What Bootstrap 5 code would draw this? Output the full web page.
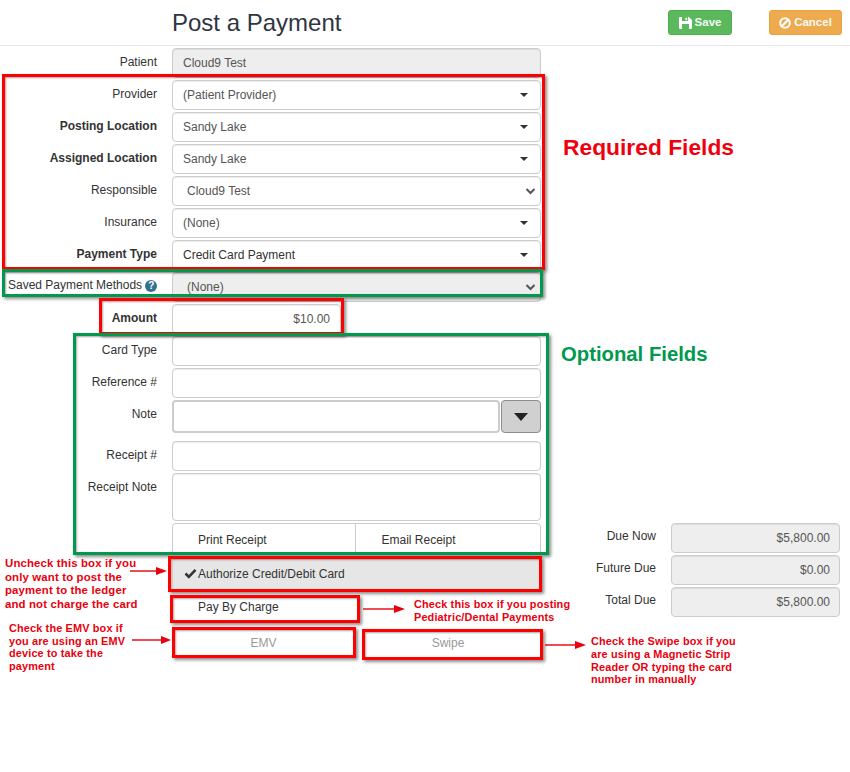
<!DOCTYPE html>
<html lang="en">
<head>
<meta charset="utf-8">
<title>Post a Payment</title>
<link href="https://cdn.jsdelivr.net/npm/bootstrap@5.3.0/dist/css/bootstrap.min.css" rel="stylesheet">
<style>
html,body{margin:0;background:#fff}
body{font-family:"Liberation Sans",Arial,sans-serif;font-size:12px;color:#333}
.pay-page{position:relative;width:850px;height:772px;overflow:hidden}
.pay-head{height:46px;border-bottom:1px solid #e7e7e7;padding-left:172px;padding-right:8px}
.pay-title{font-size:24px;font-weight:400;margin:0;color:#2f3542;line-height:42px;flex:1}
.pay-btn{font-size:11.5px;font-weight:700;color:#f4fbf4;height:25px;padding:0;border-radius:3px;display:flex;align-items:center;justify-content:center;gap:3px;border:1px solid transparent}
.pay-save{width:64px;background:#5cb85c;border-color:#4cae4c;margin-right:37px}
.pay-cancel{width:73px;background:#eeaa4f;border-color:#eea236}
.pay-save:hover{background:#5cb85c;color:#fff}.pay-cancel:hover{background:#eeaa4f;color:#fff}
.pay-left{width:541px;padding-top:2px}
.pay-right{margin-top:477px;width:284px;margin-left:15px}
.frow{display:flex;margin-bottom:2px}
.flabel{width:157px;margin:0 15px 0 0;text-align:right;padding-top:6px;line-height:16px;flex:none;white-space:nowrap;color:#333}
.flabel.strong{font-weight:700}
.flabel.due{width:100px;padding-top:5px}
.fbox.form-control,.fbox.form-select{height:30px;min-height:0;font-size:12px;color:#555;border:1px solid #ccc;border-radius:4px;padding:0 10px;box-shadow:inset 0 1px 1px rgba(0,0,0,.075);line-height:28px}
.fbox.form-select{background-position:right 10px center;background-size:12px 10px;padding-right:24px}
.fbox.caret{appearance:none;background-image:url("data:image/svg+xml,%3Csvg xmlns='http://www.w3.org/2000/svg' viewBox='0 0 12 10'%3E%3Cpath d='M2 3h8L6 7z' fill='%23333'/%3E%3C/svg%3E")}
.fbox.native{padding-left:14px;background-size:13px 10px;background-image:url("data:image/svg+xml,%3Csvg xmlns='http://www.w3.org/2000/svg' viewBox='0 0 13 10'%3E%3Cpath d='M2.5 3l4 4 4-4' fill='none' stroke='%23555' stroke-width='2'/%3E%3C/svg%3E");background-position:right 3px center}
.fbox.dark{color:#333}
.fbox.form-control:disabled,.fbox.form-select:disabled{background-color:#eee;opacity:1}
.fbox.num{text-align:right;padding-right:10px}
.pay-right .fbox.num{padding-right:9px}
.fnarrow{width:169px;flex:none}
.fbox.tall{height:48px;resize:none;line-height:1.4}
.fbox.noteinp{height:33px;border-radius:4px;border-width:2px;box-shadow:none;flex:1}
.notebtn{width:40px;height:33px;margin-left:1px;background:#d0d0d0;border:1px solid #8c8c8c;border-radius:4px;padding:0;display:flex;align-items:center;justify-content:center}
.notebtn:hover{background:#d0d0d0}
.togs{width:369px;margin-left:172px}
.tog{font-size:12px;color:#333;background:#fff;border:1px solid #ccc;height:31px;border-radius:0;padding:3px 0 0 25px;text-align:left;line-height:18px;flex:none}
.tog:hover{background:#fff;color:#333}
.tog-a{width:183px}.tog-b{width:186px}
.togs.btn-group>.tog:first-child{border-radius:4px 0 0 0}
.togs.btn-group>.tog:last-child{border-radius:0 4px 0 0;padding-left:26px}
.tog-wide{display:flex;align-items:center;width:369px;margin-left:172px;height:31px;font-size:12px;color:#333;background:#e6e6e6;border:0;padding:0 0 0 12px;gap:1px;margin-top:4px;border-radius:0}
.tog-wide:hover{background:#e6e6e6;color:#333}
.tog-pay{display:block;width:183px;margin-left:172px;height:26px;font-size:12px;color:#333;background:#fff;border:0;padding:0 0 0 26px;margin-top:5px;text-align:left;border-radius:0}
.tog-pay:hover{background:#fff;color:#333}
.tog-pair{margin-left:172px;margin-top:8px;gap:10px;width:369px}
.tog-off{height:26px;font-size:12px;color:#999;background:#fff;border:0;padding:3px 0 0;border-radius:0;flex:none}
.tog-off:hover{background:#fff;color:#999}
.tog-emv{width:183px}.tog-swipe{width:166px}
.help-dot{display:inline-block;width:12px;height:12px;border-radius:50%;background:#31708f;color:#fff;font-size:10px;font-weight:700;line-height:12px;text-align:center}
.flabel.wide{text-align:left;padding-left:8px;width:157px;padding-top:5px}
.box-ann{position:absolute;border:3px solid #f00;box-shadow:2px 2px 3px rgba(0,0,0,.45),inset 1px 1px 2px rgba(0,0,0,.35);pointer-events:none}
.box-ann.grn{border-color:#00994d}
.txt-ann{position:absolute;color:#e8000d;font-weight:700;font-size:10.9px;white-space:nowrap;letter-spacing:.15px}
.txt-ann.wider{font-size:11.4px}
.big-req{position:absolute;left:563px;top:131px;font-size:22.8px;font-weight:700;color:#f0000f;line-height:32px;white-space:nowrap}
.big-opt{position:absolute;left:561px;top:340px;font-size:20.3px;font-weight:700;color:#00994d;line-height:28px;white-space:nowrap}
.arr-ann{position:absolute;overflow:visible}
</style>
</head>
<body>
<div class="pay-page">
  <header class="pay-head d-flex align-items-center">
    <h1 class="pay-title">Post a Payment</h1>
    <button class="btn pay-btn pay-save" type="button">
      <svg width="13" height="12" viewBox="0 0 13 12"><path fill="#fff" fill-rule="evenodd" d="M0 1a1 1 0 0 1 1-1h9l3 3v8a1 1 0 0 1-1 1H1a1 1 0 0 1-1-1zM3 0v4h6V0zM6.5.7h1.6v2.6H6.5zM3 7v5h7V7z"/></svg>Save</button>
    <button class="btn pay-btn pay-cancel" type="button">
      <svg width="12" height="12" viewBox="0 0 12 12"><circle cx="6" cy="6" r="4.8" fill="none" stroke="#fff" stroke-width="2"/><path d="M2.8 9.2l6.4-6.4" stroke="#fff" stroke-width="2"/></svg>Cancel</button>
  </header>
  <div class="d-flex">
    <main class="pay-left">
      <div class="frow"><label class="flabel">Patient</label><input class="form-control fbox" disabled value="Cloud9 Test"></div>
      <div class="frow"><label class="flabel">Provider</label><select class="form-select fbox caret"><option>(Patient Provider)</option></select></div>
      <div class="frow"><label class="flabel strong">Posting Location</label><select class="form-select fbox caret"><option>Sandy Lake</option></select></div>
      <div class="frow"><label class="flabel strong">Assigned Location</label><select class="form-select fbox caret"><option>Sandy Lake</option></select></div>
      <div class="frow"><label class="flabel">Responsible</label><select class="form-select fbox native"><option>Cloud9 Test</option></select></div>
      <div class="frow"><label class="flabel">Insurance</label><select class="form-select fbox caret"><option>(None)</option></select></div>
      <div class="frow"><label class="flabel strong">Payment Type</label><select class="form-select fbox caret dark"><option>Credit Card Payment</option></select></div>
      <div class="frow"><label class="flabel wide">Saved Payment Methods <span class="help-dot">?</span></label><select class="form-select fbox native" disabled><option>(None)</option></select></div>
      <div class="frow"><label class="flabel strong">Amount</label><input class="form-control fbox num fnarrow" value="$10.00"></div>
      <div class="frow"><label class="flabel">Card Type</label><input class="form-control fbox"></div>
      <div class="frow"><label class="flabel">Reference #</label><input class="form-control fbox"></div>
      <div class="frow mb-2"><label class="flabel">Note</label><input class="form-control fbox noteinp"><button class="btn notebtn" type="button" aria-label="Open"><svg width="14" height="8" viewBox="0 0 14 8"><path d="M0 0h14L7 8z" fill="#222"/></svg></button></div>
      <div class="frow"><label class="flabel">Receipt #</label><input class="form-control fbox"></div>
      <div class="frow"><label class="flabel">Receipt Note</label><textarea class="form-control fbox tall"></textarea></div>
      <div class="btn-group togs d-flex"><button class="btn tog tog-a" type="button">Print Receipt</button><button class="btn tog tog-b" type="button">Email Receipt</button></div>
      <button class="btn tog-wide" type="button"><svg width="13" height="11" viewBox="0 0 13 11"><path d="M1.5 5.5l3.3 3.3 6.7-7" fill="none" stroke="#333" stroke-width="2.6"/></svg>Authorize Credit/Debit Card</button>
      <button class="btn tog-pay" type="button">Pay By Charge</button>
      <div class="d-flex tog-pair"><button class="btn tog-off tog-emv" type="button">EMV</button><button class="btn tog-off tog-swipe" type="button">Swipe</button></div>
    </main>
    <aside class="pay-right">
      <div class="frow"><label class="flabel due">Due Now</label><input class="form-control fbox num" disabled value="$5,800.00"></div>
      <div class="frow"><label class="flabel due">Future Due</label><input class="form-control fbox num" disabled value="$0.00"></div>
      <div class="frow"><label class="flabel due">Total Due</label><input class="form-control fbox num" disabled value="$5,800.00"></div>
    </aside>
  </div>

  <div class="box-ann" style="left:2px;top:74px;width:543px;height:196px"></div>
  <div class="box-ann grn" style="left:2px;top:269px;width:541px;height:28px"></div>
  <div class="box-ann" style="left:99px;top:298px;width:245px;height:37px"></div>
  <div class="box-ann grn" style="left:73px;top:333px;width:476px;height:222px"></div>
  <div class="box-ann" style="left:168px;top:556px;width:374px;height:36px"></div>
  <div class="box-ann" style="left:170px;top:595px;width:190px;height:28px"></div>
  <div class="box-ann" style="left:172px;top:627px;width:184px;height:31px"></div>
  <div class="box-ann" style="left:362px;top:629px;width:181px;height:31px"></div>

  <div class="big-req">Required Fields</div>
  <div class="big-opt">Optional Fields</div>

  <div class="txt-ann wider" style="left:5px;top:557px;line-height:13.6px">Uncheck this box if you<br>only want to post the<br>payment to the ledger<br>and not charge the card</div>
  <div class="txt-ann" style="left:9px;top:622px;line-height:12.7px">Check the EMV box if<br>you are using an EMV<br>device to take the<br>payment</div>
  <div class="txt-ann" style="left:414px;top:598px;line-height:13px">Check this box if you posting<br>Pediatric/Dental Payments</div>
  <div class="txt-ann" style="left:591px;top:635px;line-height:12.8px">Check the Swipe box if you<br>are using a Magnetic Strip<br>Reader OR typing the card<br>number in manually</div>

  <svg class="arr-ann" style="left:130px;top:566px" width="38" height="10"><path d="M0 5h28" stroke="#e8000d" stroke-width="1.4"/><path d="M26 1l11 4-11 4z" fill="#e8000d"/></svg>
  <svg class="arr-ann" style="left:363px;top:604px" width="43" height="10"><path d="M0 5h32" stroke="#e8000d" stroke-width="1.4"/><path d="M31 1l11 4-11 4z" fill="#e8000d"/></svg>
  <svg class="arr-ann" style="left:132px;top:635px" width="40" height="10"><path d="M0 5h30" stroke="#e8000d" stroke-width="1.4"/><path d="M29 1l10 4-10 4z" fill="#e8000d"/></svg>
  <svg class="arr-ann" style="left:545px;top:640px" width="42" height="10"><path d="M0 5h31" stroke="#e8000d" stroke-width="1.4"/><path d="M30 1l11 4-11 4z" fill="#e8000d"/></svg>
</div>
<script src="https://cdn.jsdelivr.net/npm/bootstrap@5.3.0/dist/js/bootstrap.bundle.min.js"></script>
</body>
</html>
